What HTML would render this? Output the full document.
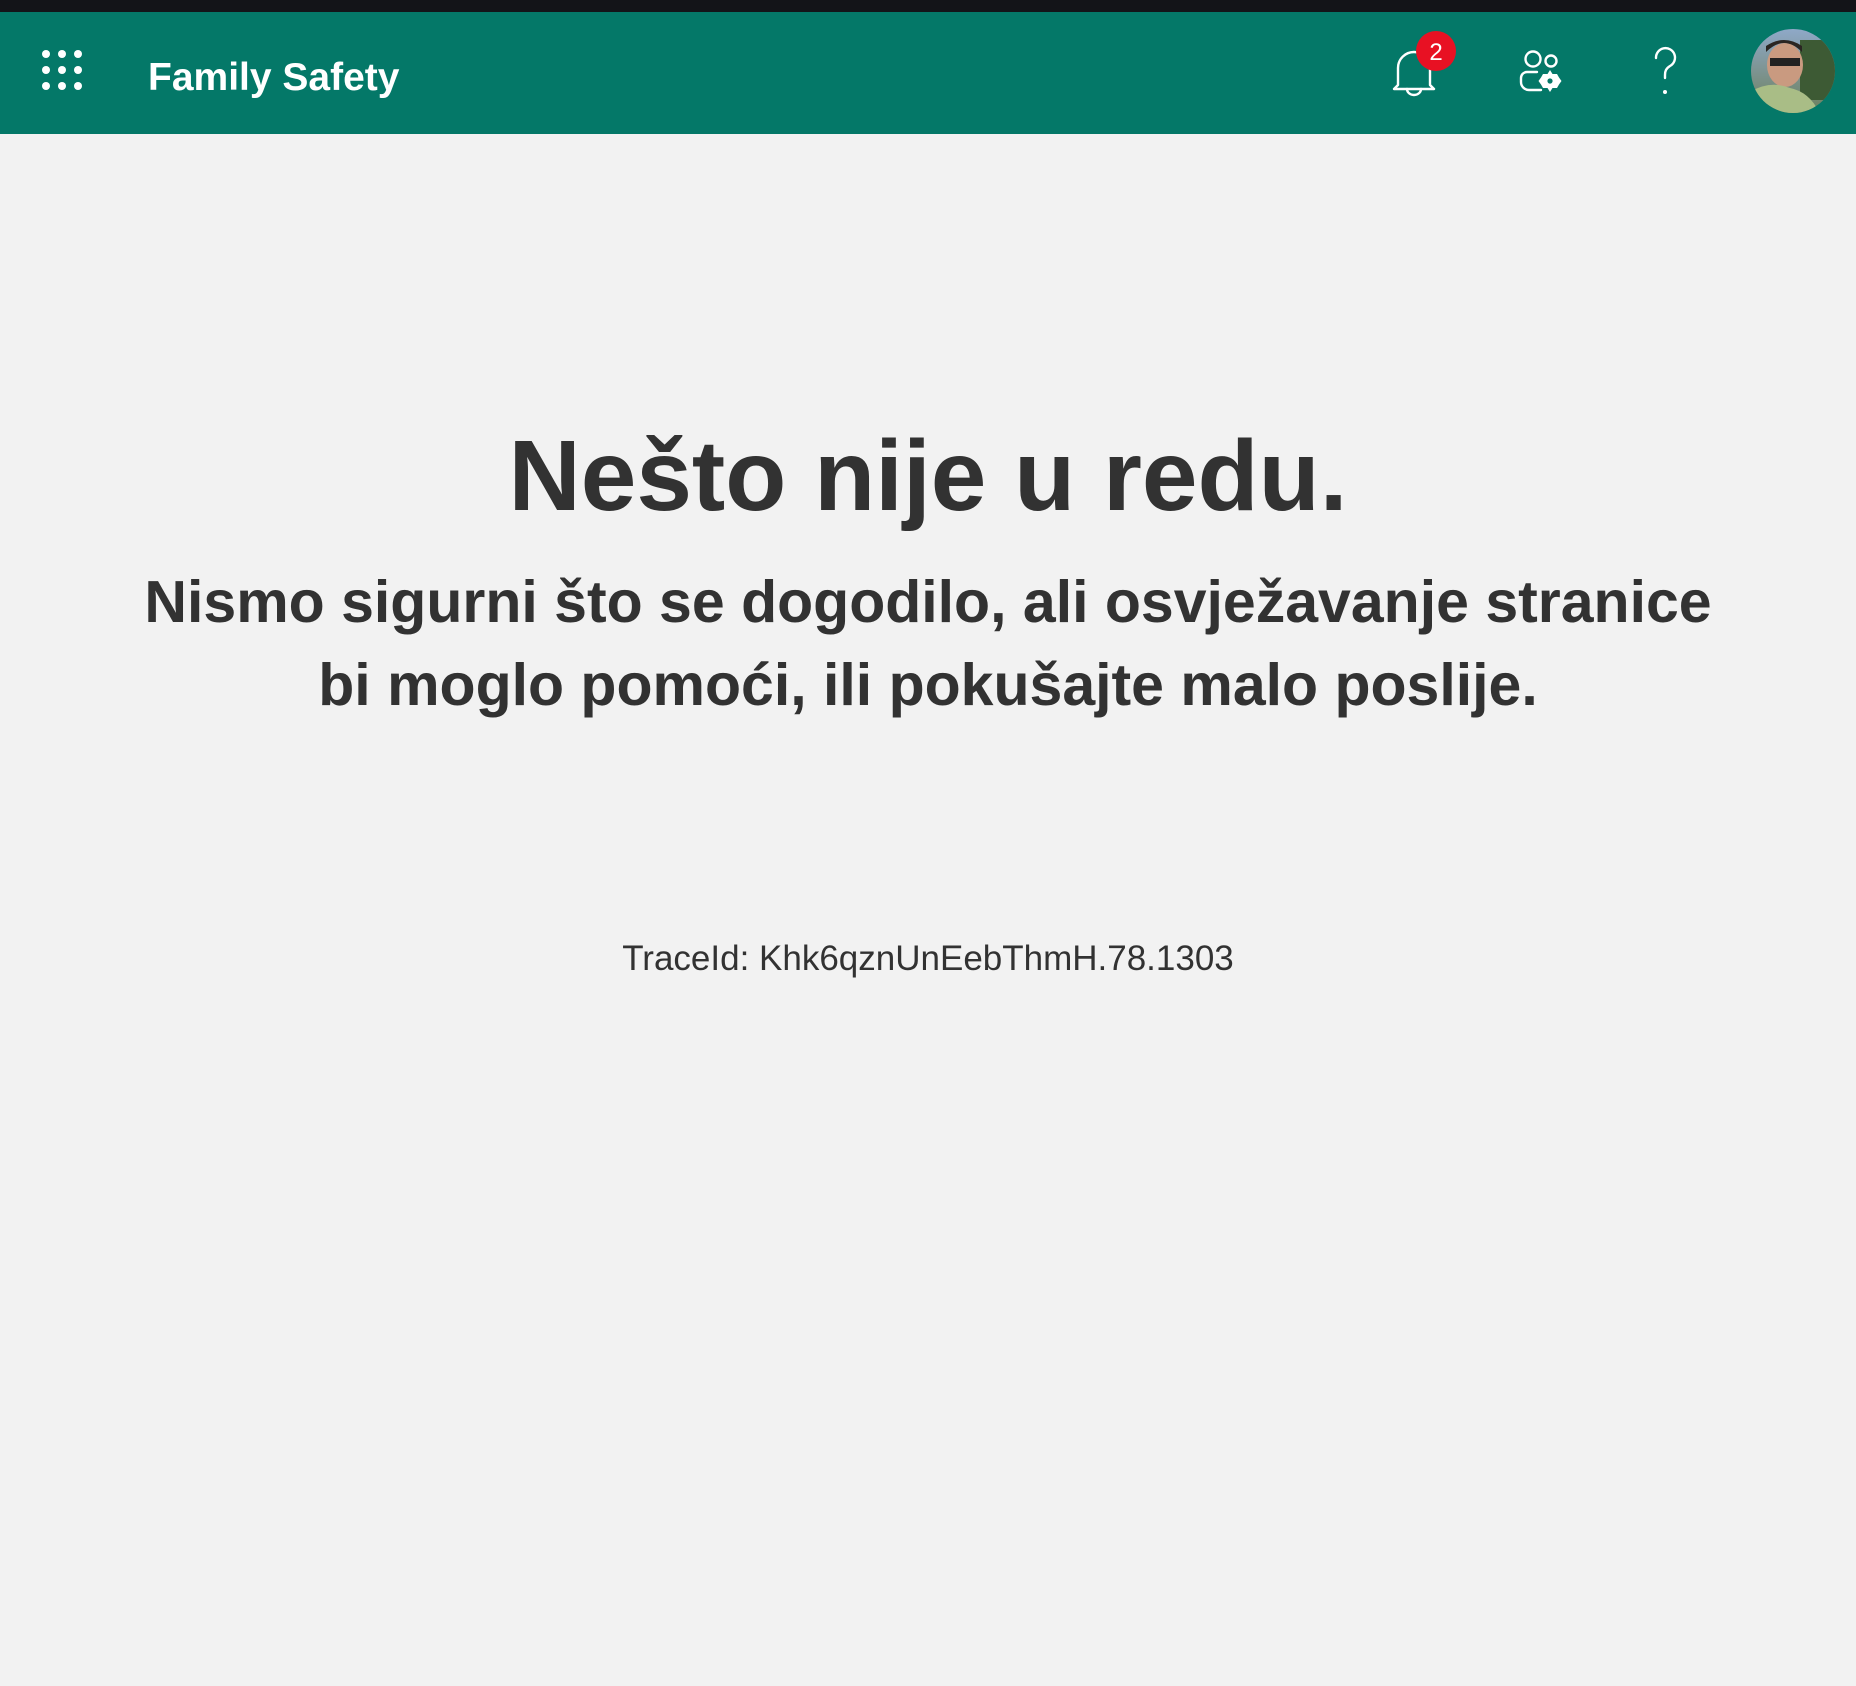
<!DOCTYPE html>
<html><head><meta charset="utf-8"><style>
html,body{margin:0;padding:0}
body{width:1856px;height:1686px;background:#f2f2f2;position:relative;overflow:hidden;font-family:"Liberation Sans",sans-serif;color:#323130}
.top{position:absolute;left:0;top:0;width:1856px;height:12px;background:#131418}
.hdr{position:absolute;left:0;top:12px;width:1856px;height:122px;background:#047868}
.t{position:absolute;white-space:nowrap;line-height:1}
.c{left:0;width:1856px;text-align:center}
</style></head><body>
<div class="top"></div>
<div class="hdr"></div>
<svg style="position:absolute;left:0;top:0" width="1856" height="140">
<g fill="#fff">
<circle cx="46" cy="54" r="4"/><circle cx="62" cy="54" r="4"/><circle cx="78" cy="54" r="4"/>
<circle cx="46" cy="70" r="4"/><circle cx="62" cy="70" r="4"/><circle cx="78" cy="70" r="4"/>
<circle cx="46" cy="86" r="4"/><circle cx="62" cy="86" r="4"/><circle cx="78" cy="86" r="4"/>
</g>
<g fill="none" stroke="#fff" stroke-width="2.4" stroke-linecap="round" stroke-linejoin="round">
<path d="M1398 85 V68 a16 16 0 0 1 32 0 V85 l4 4 H1394 z"/>
<path d="M1407 89 a7 6 0 0 0 14 0"/>
<circle cx="1533" cy="59" r="7.5"/>
<path d="M1541 90 h-12 a8 8 0 0 1 -8 -8 v-4 a6 6 0 0 1 6 -6 h10"/>
<circle cx="1551" cy="61" r="5.5"/>
<path d="M1656 58 a9.5 9.5 0 1 1 14 8 c-4 2.5 -5 5 -5 9 v3"/>
</g>
<g fill="#fff">
<circle cx="1550" cy="81" r="7"/>
<path d="M1550 70 l2.5 4 h4.5 l2 3.5 l2.5 3.5 l-2.5 3.5 l-2 3.5 h-4.5 l-2.5 4 l-2.5 -4 h-4.5 l-2 -3.5 l-2.5 -3.5 l2.5 -3.5 l2 -3.5 h4.5 z"/>
<circle cx="1665" cy="92" r="2"/>
</g>
<circle cx="1550" cy="81" r="2.6" fill="#047868"/>
<circle cx="1436" cy="51" r="20" fill="#e81123"/>
<text x="1436" y="60" fill="#fff" font-family="Liberation Sans" font-size="24" text-anchor="middle">2</text>
<defs><clipPath id="av"><circle cx="1793" cy="71" r="42"/></clipPath>
<linearGradient id="sky" x1="0" y1="0" x2="0" y2="1"><stop offset="0" stop-color="#8fa9c9"/><stop offset="1" stop-color="#6c7f5a"/></linearGradient></defs>
<g clip-path="url(#av)">
<rect x="1750" y="28" width="86" height="86" fill="url(#sky)"/>
<rect x="1800" y="40" width="36" height="60" fill="#3d5a34"/>
<ellipse cx="1785" cy="65" rx="18" ry="22" fill="#c99a80"/>
<rect x="1770" y="58" width="30" height="8" fill="#222"/>
<path d="M1766 52 q18 -18 36 0 v-6 q-18 -12 -36 0z" fill="#2a2522"/>
<path d="M1750 114 V92 q20 -12 40 -4 q20 4 30 26z" fill="#a9bd86"/>
</g>
</svg>
<div class="t" style="left:148px;top:58px;font-size:39px;font-weight:bold;color:#fff">Family Safety</div>
<div class="t c" style="top:426px;font-size:100px;font-weight:bold;color:#323232">Nešto nije u redu.</div>
<div class="t c" style="top:561px;font-size:59px;font-weight:bold;line-height:83px;color:#323232">Nismo sigurni što se dogodilo, ali osvježavanje stranice<br>bi moglo pomoći, ili pokušajte malo poslije.</div>
<div class="t c" style="top:941px;font-size:35px;color:#323232">TraceId: Khk6qznUnEebThmH.78.1303</div>
</body></html>
